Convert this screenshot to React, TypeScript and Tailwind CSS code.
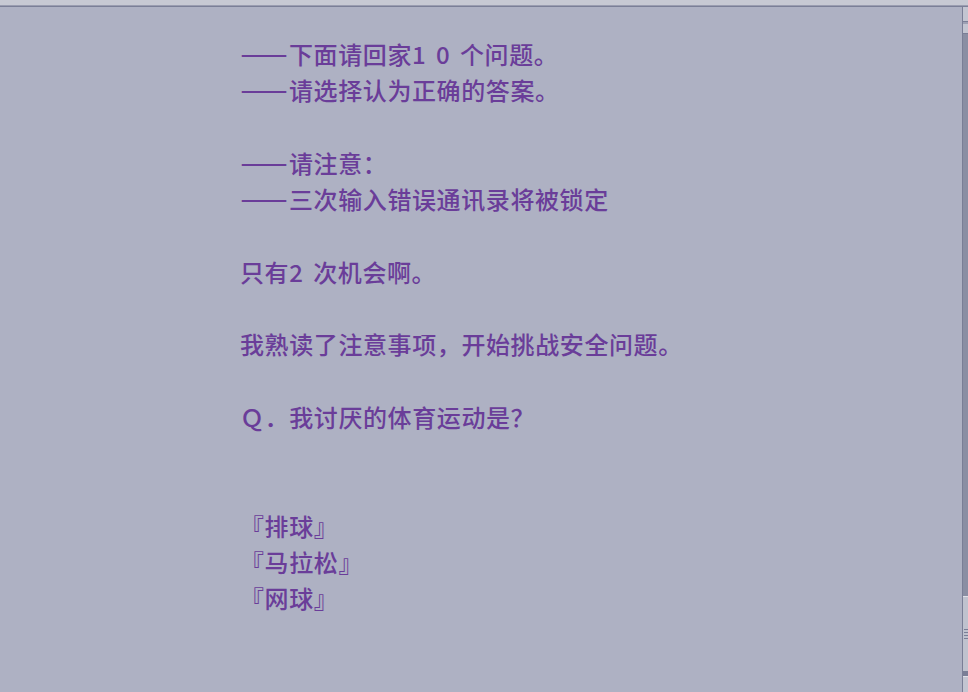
import React from "react";

const Dash = () => (
  <span className="inline-block w-[49px] [font-feature-settings:'fwid'] tracking-[0px] [text-shadow:0_1px_0_#6a3d99]">——</span>
);

const Half = ({ c }: { c: string }) => (
  <span className="inline-block w-[12px] text-center tracking-[0px]">{c}</span>
);

const Line = ({ children }: { children?: React.ReactNode }) => (
  <div className="h-[36.3px] whitespace-pre">{children}</div>
);

export default function App() {
  return (
    <div className="w-[968px] h-[692px] bg-[#aeb1c3] flex flex-col overflow-hidden">
      <div className="h-[5px] bg-[#c7c9d3]" />
      <div className="h-[1px] bg-[#9a9db0]" />
      <div className="h-[1px] bg-[#7b7f97]" />
      <div className="flex-1 flex">
        <div
          className="flex-1 pl-[240px] pt-[29px] text-[24px] leading-[36.3px] tracking-[0.6px] text-[#6a3d99] font-medium"
          style={{ fontFamily: '"Noto Sans CJK SC", "Noto Sans", sans-serif' }}
        >
          <Line>
            <Dash />
            下面请回家
            <Half c="1" />
            <Half c=" " />
            <Half c="0" />
            <Half c=" " />
            个问题。
          </Line>
          <Line>
            <Dash />
            请选择认为正确的答案。
          </Line>
          <Line />
          <Line>
            <Dash />
            请注意：
          </Line>
          <Line>
            <Dash />
            三次输入错误通讯录将被锁定
          </Line>
          <Line />
          <Line>
            只有
            <Half c="2" />
            <Half c=" " />
            次机会啊。
          </Line>
          <Line />
          <Line>我熟读了注意事项，开始挑战安全问题。</Line>
          <Line />
          <Line>Ｑ．我讨厌的体育运动是？</Line>
          <Line />
          <Line />
          <Line>『排球』</Line>
          <Line>『马拉松』</Line>
          <Line>『网球』</Line>
        </div>
        <div className="w-[6px] flex flex-col border-l border-[#7a7e96]">
          <div className="h-[15px] bg-[#c3c5d1] border-b border-[#7a7e96]" />
          <div className="h-[2px] bg-[#9da0b3]" />
          <div className="h-[10px] bg-[#c3c5d1] border-b border-[#7a7e96]" />
          <div className="flex-1 bg-[#8a8ea3]" />
          <div className="h-[75px] bg-[#bfc2ce] border-t border-[#dfe0e7] flex flex-col items-center justify-center gap-[2px]">
            <div className="w-[4px] h-[1px] bg-[#7a7e96]" />
            <div className="w-[4px] h-[1px] bg-[#7a7e96]" />
            <div className="w-[4px] h-[1px] bg-[#7a7e96]" />
            <div className="w-[4px] h-[1px] bg-[#7a7e96]" />
          </div>
          <div className="h-[5px] bg-[#7a7e96]" />
          <div className="h-[16px] bg-[#c3c5d1] border-t border-[#dfe0e7]" />
        </div>
      </div>
    </div>
  );
}
